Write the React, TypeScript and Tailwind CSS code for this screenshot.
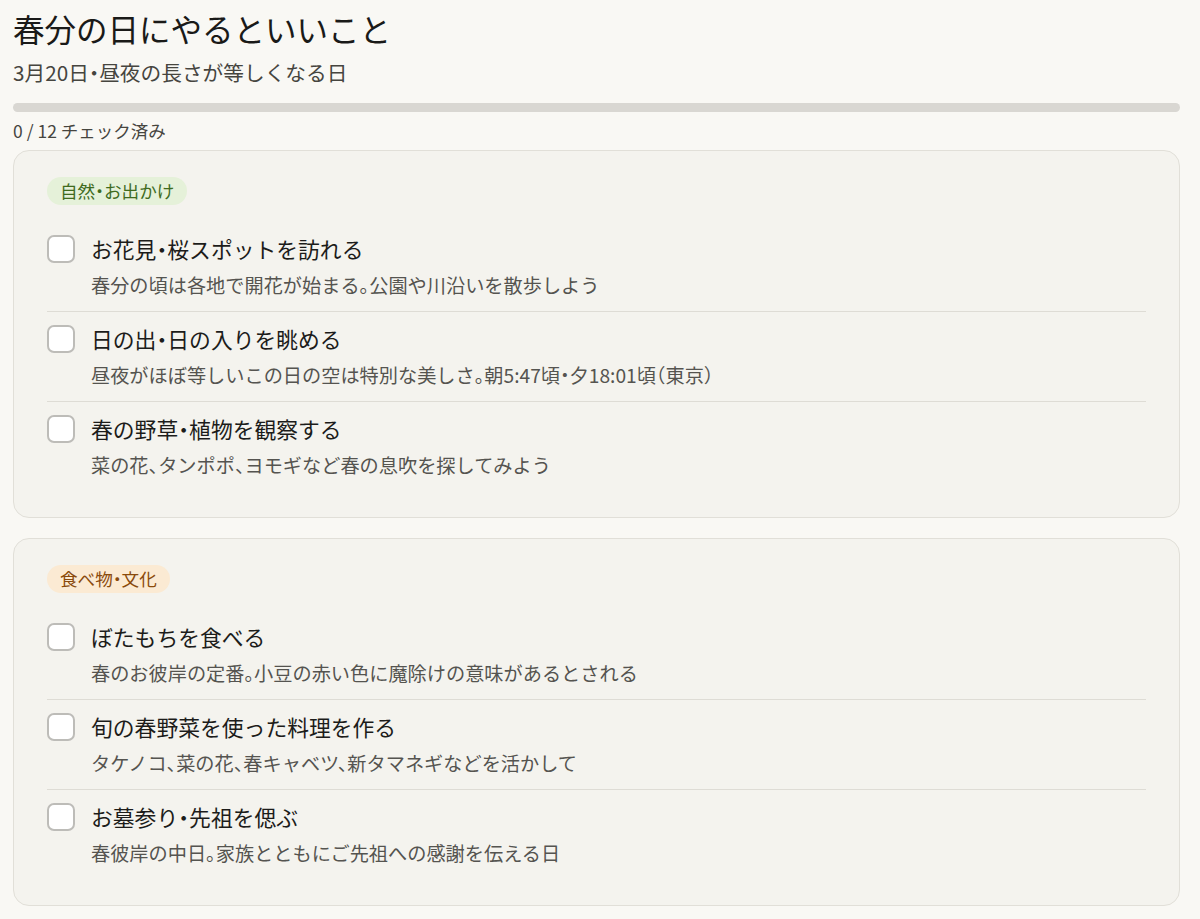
import React from "react";

type Item = { title: string; desc: string };
type Section = { label: string; tone: "green" | "orange"; items: Item[] };

const sections: Section[] = [
  {
    label: "自然・お出かけ",
    tone: "green",
    items: [
      { title: "お花見・桜スポットを訪れる", desc: "春分の頃は各地で開花が始まる。公園や川沿いを散歩しよう" },
      { title: "日の出・日の入りを眺める", desc: "昼夜がほぼ等しいこの日の空は特別な美しさ。朝5:47頃・夕18:01頃（東京）" },
      { title: "春の野草・植物を観察する", desc: "菜の花、タンポポ、ヨモギなど春の息吹を探してみよう" },
    ],
  },
  {
    label: "食べ物・文化",
    tone: "orange",
    items: [
      { title: "ぼたもちを食べる", desc: "春のお彼岸の定番。小豆の赤い色に魔除けの意味があるとされる" },
      { title: "旬の春野菜を使った料理を作る", desc: "タケノコ、菜の花、春キャベツ、新タマネギなどを活かして" },
      { title: "お墓参り・先祖を偲ぶ", desc: "春彼岸の中日。家族とともにご先祖への感謝を伝える日" },
    ],
  },
];

const TOTAL = 12;

function ChecklistRow({ item, last }: { item: Item; last: boolean }) {
  return (
    <label
      className={
        "flex items-start gap-4 pt-[13px] pb-[14px] cursor-pointer " +
        (last ? "" : "border-b border-[#dedcd5]")
      }
    >
      <input type="checkbox" className="sr-only" />
      <span className="h-7 w-7 shrink-0 rounded-[7px] border-2 border-[#bdbcb8] bg-white" />
      <span className="flex flex-col">
        <span className="text-[21.8px] leading-[28px] text-[#1c1c1a]">{item.title}</span>
        <span className="mt-[10px] text-[19.2px] leading-[24px] text-[#555450]">{item.desc}</span>
      </span>
    </label>
  );
}

function SectionCard({ section }: { section: Section }) {
  const badge =
    section.tone === "green"
      ? "bg-[#e5f1d9] text-[#3f6b1e]"
      : "bg-[#fbead3] text-[#8a4a0c]";
  return (
    <div className="rounded-2xl border border-[#e1dfd8] bg-[#f4f3ee] px-[33px] pt-[26px] pb-[26px]">
      <span className={"inline-flex h-7 items-center rounded-full px-[13px] text-[17.6px] " + badge}>
        {section.label}
      </span>
      <div className="mt-[17px] flex flex-col">
        {section.items.map((it, i) => (
          <ChecklistRow key={it.title} item={it} last={i === section.items.length - 1} />
        ))}
      </div>
    </div>
  );
}

export default function App() {
  const done = 0;
  return (
    <div
      className="min-h-screen bg-[#f9f8f4] pl-[13px] pr-[20px] pt-2 pb-6 [font-feature-settings:'halt']"
      style={{ fontFamily: '"Noto Sans CJK JP", "Noto Sans", sans-serif' }}
    >
      <h1 className="text-[31.5px] leading-[40px] font-normal text-[#1a1a18]">春分の日にやるといいこと</h1>
      <p className="mt-[10px] text-[20.7px] leading-[28px] text-[#46453f]">3月20日・昼夜の長さが等しくなる日</p>
      <div className="mt-[17px] h-[9px] w-full rounded-full bg-[#d9d7d2]">
        <div className="h-full rounded-full bg-[#7aa35a]" style={{ width: `${(done / TOTAL) * 100}%` }} />
      </div>
      <p className="mt-[8px] text-[17.5px] leading-[22px] text-[#46453f]">
        {done} / {TOTAL} チェック済み
      </p>
      <div className="mt-[8px] flex flex-col gap-5">
        {sections.map((s) => (
          <SectionCard key={s.label} section={s} />
        ))}
      </div>
    </div>
  );
}
